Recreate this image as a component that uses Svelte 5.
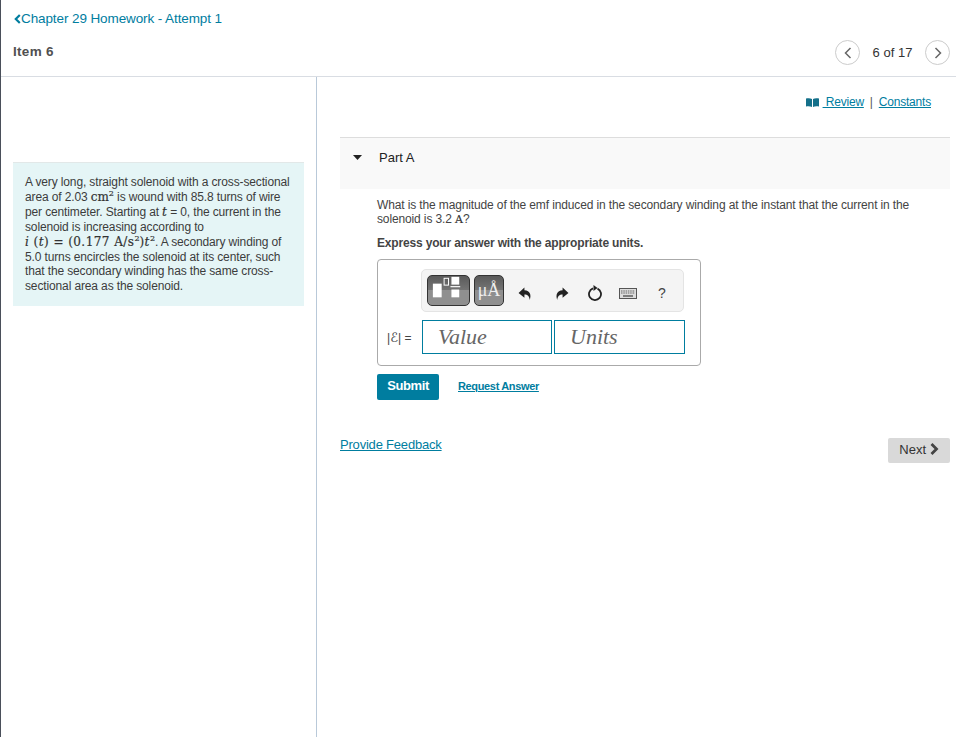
<script>
  const paragraphEnd = 'A secondary winding of';
</script>

<div class="page">
  <header class="header">
    <div class="crumb">
      <svg class="crumb-icon" viewBox="0 0 7 10" width="7" height="10"><path d="M5.8 1 1.800 5l4 4" fill="none" stroke="#007d9f" stroke-width="2.200"/></svg>
      <a href="#a">Chapter 29 Homework - Attempt 1</a>
    </div>
    <div class="item-row">
      <strong class="item">Item 6</strong>
      <nav class="pager">
        <span class="circle"><svg viewBox="0 0 8 12" width="8" height="12"><path d="M6.500 1 1.500 6l5 5" fill="none" stroke="#666" stroke-width="1.500"/></svg></span>
        <span class="count">6 of 17</span>
        <span class="circle"><svg viewBox="0 0 8 12" width="8" height="12"><path d="M1.500 1l5 5-5 5" fill="none" stroke="#666" stroke-width="1.500"/></svg></span>
      </nav>
    </div>
  </header>

  <div class="columns">
    <aside class="left">
      <div class="info">
        A very long, straight solenoid with a cross-sectional area of 2.03 <span class="m">cm</span><sup class="m sup">2</sup> is wound with 85.8 turns of wire per centimeter. Starting at <i class="m">t</i> = 0, the current in the solenoid is increasing according to <br />
        <i class="m eq">i</i><span class="m eq">&nbsp;(</span><i class="m eq">t</i><span class="m eq">) = (0.177 A/s</span><sup class="m sup">2</sup><span class="m eq">)</span><i class="m eq">t</i><sup class="m sup">2</sup>. {paragraphEnd} 5.0 turns encircles the solenoid at its center, such that the secondary winding has the same cross-sectional area as the solenoid.
      </div>
    </aside>

    <main class="right">
      <div class="tools">
        <svg viewBox="0 0 13 9" width="13" height="9"><path d="M0 .5C2 0 4.500 0 6 1v8C4.500 8.200 2 8.200 0 8.500zM13 .5C11 0 8.500 0 7 1v8c1.500-.8 4-.8 6-.5z" fill="#14708a"/></svg>
        <a href="#r">&nbsp;Review</a>
        <span class="sep">|</span>
        <a href="#c">Constants</a>
      </div>

      <section class="part">
        <svg class="caret" viewBox="0 0 9 5" width="9" height="5"><path d="M0 0h9L4.500 5z" fill="#222"/></svg>
        <span>Part A</span>
      </section>

      <div class="body">
        <p class="question">What is the magnitude of the emf induced in the secondary winding at the instant that the current in the solenoid is 3.2 <span class="m">A</span>?</p>
        <p class="express">Express your answer with the appropriate units.</p>

        <div class="answer">
          <div class="toolbar">
            <span class="tb-btn tb-template">
              <svg viewBox="0 0 42 30" width="42" height="30">
                <rect x="5" y="8.500" width="9" height="14" fill="#fff"/>
                <rect x="16.500" y="3" width="4.500" height="7" fill="none" stroke="#fff" stroke-width="1"/>
                <rect x="24" y="1.500" width="8" height="8" fill="#fff"/>
                <rect x="23" y="11" width="10" height="1.200" fill="#fff"/>
                <rect x="24" y="14.500" width="8" height="8" fill="#fff"/>
              </svg>
            </span>
            <span class="tb-btn tb-unit">μÅ</span>
            <span class="icon-slot first">
              <svg viewBox="0 0 14 14" width="15" height="15"><path d="M6 1.500 .5 6.500 6 11V8c3 0 4.500 1.500 5 5 1.500-4.500.5-8.500-5-9z" fill="#222"/></svg>
            </span>
            <span class="icon-slot second">
              <svg viewBox="0 0 14 14" width="15" height="15"><path d="M8 1.500 13.500 6.500 8 11V8c-3 0-4.500 1.500-5 5-1.500-4.500-.5-8.500 5-9z" fill="#222"/></svg>
            </span>
            <span class="icon-slot third">
              <svg viewBox="0 0 16 16" width="16" height="16"><path d="M10.500 3.600a6 6 0 1 1-4.500-.2" fill="none" stroke="#222" stroke-width="1.800"/><path d="M6.500 0v6l4-3z" fill="#222"/></svg>
            </span>
            <span class="icon-slot">
              <svg viewBox="0 0 18 11" width="18" height="11"><rect x=".5" y=".5" width="17" height="10" fill="#ddd" stroke="#555"/><path d="M2 3h14M2 5h14" stroke="#666" stroke-dasharray="1.500 .8"/><path d="M4 8h10" stroke="#555" stroke-width="1.400"/></svg>
            </span>
            <span class="icon-slot help">?</span>
          </div>
          <div class="fields">
            <span class="label">|<span class="script">ℰ</span>| =</span>
            <span class="field">Value</span>
            <span class="field">Units</span>
          </div>
        </div>

        <div class="actions">
          <button class="submit">Submit</button>
          <a class="request" href="#q">Request Answer</a>
        </div>
      </div>

      <div class="footer">
        <a class="feedback" href="#f">Provide Feedback</a>
        <button class="next">Next <svg viewBox="0 0 9 12" width="9" height="12"><path d="M1.500 1l5 5-5 5" fill="none" stroke="#444" stroke-width="2.800"/></svg></button>
      </div>
    </main>
  </div>
</div>

<style>
  :global(body) {
    margin: 0;
    background: #fff;
  }

  .page {
    box-sizing: border-box;
    width: 956px;
    height: 737px;
    border-left: 1px solid #4a4f5a;
    font-family: "Liberation Sans", Arial, sans-serif;
    color: #333;
    display: flex;
    flex-direction: column;
    overflow: hidden;
  }

  a {
    color: #007d9f;
  }

  .header {
    height: 77px;
    box-sizing: border-box;
    border-bottom: 1px solid #d9dde3;
    flex: none;
  }

  .crumb {
    display: flex;
    align-items: center;
    padding: 11px 0 0 13px;
    font-size: 13.500px;
    letter-spacing: -0.100px;
    line-height: 16px;
  }

  .crumb a {
    text-decoration: none;
  }

  .item-row {
    display: flex;
    align-items: center;
    justify-content: space-between;
    padding: 13px 6px 0 12px;
  }

  .item {
    font-size: 13.500px;
    letter-spacing: 0.300px;
    color: #505050;
    margin-top: -3px;
  }

  .pager {
    display: flex;
    align-items: center;
  }

  .circle {
    box-sizing: border-box;
    width: 25px;
    height: 25px;
    border: 1px solid #ccc;
    border-radius: 50%;
    display: flex;
    align-items: center;
    justify-content: center;
  }

  .count {
    font-size: 13px;
    width: 65px;
    text-align: center;
  }

  .columns {
    flex: 1;
    display: flex;
    min-height: 0;
  }

  .left {
    box-sizing: border-box;
    width: 316px;
    flex: none;
    border-right: 1px solid #b9c9d9;
    padding: 85px 12px 0 12px;
  }

  .info {
    box-sizing: border-box;
    height: 144px;
    background: #e5f5f6;
    border-top: 1px solid #e2e8e8;
    padding: 12px 12px 0 12px;
    font-size: 12px;
    letter-spacing: -0.130px;
    line-height: 14.900px;
    color: #3c3c3c;
  }

  .m {
    font-family: "DejaVu Serif", "Liberation Serif", serif;
    font-size: 12px;
    font-weight: 400;
    letter-spacing: 0;
    line-height: 1;
    color: #333;
    -webkit-text-stroke: 0.2px #333;
  }

  .sup {
    font-size: 8px;
    line-height: 0;
  }

  .eq {
    letter-spacing: 0.450px;
  }

  .right {
    flex: 1;
    padding: 0 6px 0 23px;
    min-width: 0;
  }

  .tools {
    height: 60px;
    box-sizing: border-box;
    padding-top: 17px;
    display: flex;
    align-items: flex-start;
    justify-content: flex-end;
    padding-right: 19px;
    font-size: 12px;
    letter-spacing: -0.200px;
    line-height: 16px;
  }

  .tools svg {
    margin: 4px 3.500px 0 0;
  }

  .sep {
    margin: 0 6px;
    color: #555;
  }

  .part {
    box-sizing: border-box;
    height: 52px;
    border-top: 1px solid #ddd;
    background: #f9f9f9;
    display: flex;
    align-items: flex-start;
    padding: 12px 0 0 13px;
    font-size: 13px;
    line-height: 15px;
    color: #222;
  }

  .caret {
    margin: 5px 17px 0 0;
  }

  .body {
    padding-left: 37px;
  }

  .question {
    margin: 9px 30px 0 0;
    font-size: 12px;
    letter-spacing: -0.130px;
    line-height: 14px;
    color: #444;
  }

  .question .m {
    font-size: 11px;
  }

  .express {
    margin: 9px 0 0;
    font-size: 12px;
    letter-spacing: -0.170px;
    line-height: 16px;
    font-weight: 700;
    color: #444;
  }

  .answer {
    box-sizing: border-box;
    width: 324px;
    height: 107px;
    margin-top: 8px;
    border: 1px solid #aaa;
    border-radius: 4px;
    padding: 9px 0 0 0;
  }

  .toolbar {
    box-sizing: border-box;
    width: 263px;
    height: 43px;
    margin-left: 43px;
    background: #f4f4f4;
    border: 1px solid #e4e4e4;
    border-radius: 5px;
    display: flex;
    align-items: center;
    padding-left: 5px;
  }

  .tb-btn {
    box-sizing: border-box;
    height: 31px;
    border: 1px solid #333;
    border-radius: 5px;
    background: linear-gradient(#5a5a5a 0, #757575 50%, #8f8f8f 50%, #8f8f8f 100%);
    display: flex;
    align-items: center;
    justify-content: center;
    margin-top: -1px;
  }

  .tb-template {
    width: 43px;
  }

  .tb-unit {
    width: 30px;
    margin-left: 4px;
    font-family: "Liberation Serif", serif;
    font-size: 18px;
    color: #eee;
  }

  .icon-slot {
    width: 34px;
    display: flex;
    justify-content: center;
    align-items: center;
    margin-top: 5px;
  }

  .first {
    margin-left: 4px;
  }

  .second {
    margin-left: 2px;
  }

  .third {
    margin-right: -1px;
  }

  .help {
    font-size: 14px;
    color: #444;
  }

  .fields {
    display: flex;
    align-items: center;
    margin-top: 8px;
  }

  .label {
    width: 44px;
    box-sizing: border-box;
    padding-left: 9px;
    font-size: 12px;
    color: #444;
  }

  .script {
    font-family: "DejaVu Sans", sans-serif;
    font-size: 13px;
  }

  .field {
    box-sizing: border-box;
    width: 130px;
    height: 34px;
    margin-right: 2px;
    border: 1px solid #007d9f;
    padding-left: 15px;
    font-family: "Liberation Serif", serif;
    font-style: italic;
    font-size: 22px;
    line-height: 32px;
    color: #666;
  }

  .field + .field {
    width: 131px;
    margin-right: 0;
  }

  .actions {
    display: flex;
    align-items: center;
    margin-top: 8px;
  }

  .submit {
    width: 62px;
    height: 26px;
    border: 0;
    border-radius: 2px;
    background: #007d9f;
    color: #fff;
    font: 700 13px "Liberation Sans", Arial, sans-serif;
    letter-spacing: -0.400px;
    padding: 0 0 3px;
  }

  .request {
    margin: -2px 0 0 19px;
    font-size: 11px;
    letter-spacing: -0.350px;
    font-weight: 700;
  }

  .footer {
    display: flex;
    justify-content: space-between;
    align-items: flex-start;
    margin-top: 36px;
  }

  .feedback {
    padding-top: 1px;
    font-size: 13px;
    letter-spacing: -0.200px;
    line-height: 16px;
  }

  .next {
    width: 62px;
    height: 25px;
    margin-top: 2px;
    border: 0;
    border-radius: 2px;
    background: #d9d9d9;
    color: #333;
    font: 13px "Liberation Sans", Arial, sans-serif;
    padding: 0 0 2px;
  }

  .next svg {
    vertical-align: -1px;
  }
</style>
